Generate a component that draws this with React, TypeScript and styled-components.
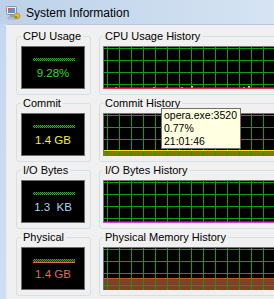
import React from "react";
import styled, { createGlobalStyle } from "styled-components";

const Global = createGlobalStyle`
  html, body { margin: 0; padding: 0; background: #f0f0f0; }
  body { font-family: "Liberation Sans", Arial, sans-serif; }
`;

const Window = styled.div`
  position: relative;
  width: 274px;
  height: 299px;
  overflow: hidden;
  display: flex;
  flex-direction: column;
  background: #c6d9ee;
`;

const TitleBar = styled.div`
  flex: none;
  height: 24px;
  box-sizing: border-box;
  padding: 2px 0 0 5px;
  display: flex;
  align-items: center;
  gap: 5px;
  background: linear-gradient(to right, #bcd1e9, #d6e4f3);
  font-size: 12px;
  color: #000;
`;

const Body = styled.div`
  flex: 1;
  display: flex;
  min-height: 0;
`;

const Frame = styled.div`
  flex: none;
  width: 6px;
  background: linear-gradient(to bottom, #c4d8ee, #cfdff1);
`;

const Client = styled.div`
  flex: 1;
  min-width: 0;
  background: #f0f0f0;
  border-top: 1px solid #b7c8db;
  border-left: 1px solid #e4ecf5;
  padding: 5px 0 0 9px;
  display: flex;
  flex-direction: column;
  gap: 2px;
`;

const Row = styled.div`
  display: grid;
  grid-template-columns: 75px 190px;
  column-gap: 8px;
`;

const Group = styled.fieldset<{ $pl: number }>`
  margin: 0;
  min-width: 0;
  padding: 3px 5px 5px ${(p) => p.$pl}px;
  border: 1px solid #d5dfe5;
  border-radius: 3px;
`;

const Legend = styled.legend`
  padding: 0 2px;
  font-size: 11px;
  line-height: 13px;
  color: #000;
`;

const Meter = styled.div`
  width: 64px;
  height: 43px;
  box-sizing: border-box;
  background: #000;
  border: 1px solid #6d6d6d;
  display: flex;
  flex-direction: column;
  align-items: center;
`;

const MeterBar = styled.div<{ $accent?: string }>`
  margin: 11px 0 0 2px;
  width: 42px;
  height: 3px;
  background: repeating-conic-gradient(#2ea82e 0 25%, #0b2e0b 0 50%) 0 0 / 2px 2px;
  box-shadow: ${(p) => (p.$accent ? `0 1px 0 ${p.$accent}` : "none")};
`;

const MeterValue = styled.div<{ $color: string }>`
  margin-top: 5px;
  font-size: 11.5px;
  line-height: 14px;
  white-space: pre;
  color: ${(p) => p.$color};
`;

const GraphSvg = styled.svg`
  display: block;
`;

const Tooltip = styled.div`
  position: absolute;
  left: 161px;
  top: 108px;
  width: 80px;
  box-sizing: border-box;
  padding: 0 2px;
  background: #ffffe1;
  border: 1px solid #6e6e6e;
  font-size: 10.5px;
  line-height: 13px;
  white-space: nowrap;
  color: #000;
`;

const W = 180;
const H = 43;

type Spike = [number, number, string];

function Graph({
  fillTop,
  fillColor,
  fillLine,
  bottomLine,
  spikes = [],
}: {
  fillTop?: number;
  fillColor?: string;
  fillLine?: string;
  bottomLine?: string;
  spikes?: Spike[];
}) {
  const verts: number[] = [];
  for (let x = 4.5; x < W; x += 12) verts.push(x);
  const hors = [2.5, 14.5, 26.5, 38.5];
  return (
    <GraphSvg width={W} height={H} viewBox={`0 0 ${W} ${H}`}>
      <rect width={W} height={H} fill="#000" />
      {fillTop !== undefined && (
        <rect x={0} y={fillTop} width={W} height={H - fillTop} fill={fillColor} />
      )}
      {verts.map((x) => (
        <line key={"v" + x} x1={x} x2={x} y1={0} y2={H} stroke="#0ca00c" strokeWidth={1} />
      ))}
      {hors.map((y) => (
        <line key={"h" + y} x1={0} x2={W} y1={y} y2={y} stroke="#0ca00c" strokeWidth={1} />
      ))}
      {fillTop !== undefined && fillLine && (
        <line x1={0} x2={W} y1={fillTop + 0.5} y2={fillTop + 0.5} stroke={fillLine} strokeWidth={1} />
      )}
      {spikes.map(([x, h, c], i) => (
        <rect key={i} x={x} y={H - 1 - h} width={2} height={h} fill={c} />
      ))}
      {bottomLine && (
        <line x1={0} x2={W} y1={H - 0.75} y2={H - 0.75} stroke={bottomLine} strokeWidth={1.5} />
      )}
      <line x1={0} x2={W} y1={0.5} y2={0.5} stroke="#6f7a6f" strokeWidth={1} />
      <line x1={0.5} x2={0.5} y1={0} y2={H} stroke="#6f7a6f" strokeWidth={1} />
    </GraphSvg>
  );
}

function AppIcon() {
  return (
    <svg width="16" height="16" viewBox="0 0 16 16">
      <rect x="1.5" y="1.5" width="10" height="8" rx="1" fill="#e9edf2" stroke="#8894a3" />
      <rect x="3" y="3" width="7" height="5" fill="#5a92d2" />
      <path d="M3 3 L7 3 L3 6 Z" fill="#e8563a" />
      <rect x="5" y="10" width="4" height="2" fill="#9aa4b0" />
      <rect x="3" y="12" width="8" height="2" rx="0.5" fill="#c5ccd5" stroke="#8894a3" strokeWidth="0.6" />
      <circle cx="12" cy="11" r="3" fill="#f2b233" stroke="#c27a14" strokeWidth="0.6" />
      <circle cx="11" cy="12" r="1.3" fill="#4cae3c" />
    </svg>
  );
}

type RowData = {
  label: string;
  history: string;
  value: string;
  color: string;
  accent?: string;
  graph: React.ComponentProps<typeof Graph>;
};

const rows: RowData[] = [
  {
    label: "CPU Usage",
    history: "CPU Usage History",
    value: "9.28%",
    color: "#3bd83b",
    graph: {
      bottomLine: "#e0304a",
      spikes: [
        [12, 1, "#3bd83b"],
        [50, 1, "#d8d840"],
        [63, 1, "#3bd83b"],
        [78, 1, "#d8d840"],
        [88, 2, "#d8d840"],
        [140, 1, "#d8d840"],
        [145, 2, "#d8d840"],
      ],
    },
  },
  {
    label: "Commit",
    history: "Commit History",
    value: "1.4 GB",
    color: "#f0f040",
    graph: { fillTop: 37, fillColor: "#7c7c00", fillLine: "#e8e800" },
  },
  {
    label: "I/O Bytes",
    history: "I/O Bytes History",
    value: "1.3  KB",
    color: "#a6d6ee",
    graph: { bottomLine: "#d83cd0" },
  },
  {
    label: "Physical",
    history: "Physical Memory History",
    value: "1.4 GB",
    color: "#d8704e",
    accent: "#d8704e",
    graph: { fillTop: 31, fillColor: "#7e4226", fillLine: "#ad5c3a" },
  },
];

export default function App() {
  return (
    <>
      <Global />
      <Window>
        <TitleBar>
          <AppIcon />
          <span>System Information</span>
        </TitleBar>
        <Body>
          <Frame />
          <Client>
            {rows.map((r) => (
              <Row key={r.label}>
                <Group $pl={4}>
                  <Legend>{r.label}</Legend>
                  <Meter>
                    <MeterBar $accent={r.accent} />
                    <MeterValue $color={r.color}>{r.value}</MeterValue>
                  </Meter>
                </Group>
                <Group $pl={3}>
                  <Legend>{r.history}</Legend>
                  <Graph {...r.graph} />
                </Group>
              </Row>
            ))}
          </Client>
        </Body>
        <Tooltip>
          opera.exe:3520
          <br />
          0.77%
          <br />
          21:01:46
        </Tooltip>
      </Window>
    </>
  );
}
